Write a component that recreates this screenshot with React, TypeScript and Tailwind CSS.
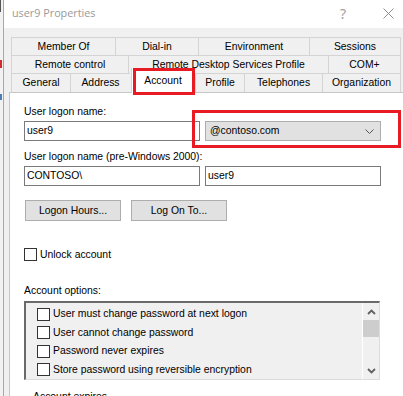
import React from "react";

type Tab = { label: string; w: string };

const ROW1: Tab[] = [
  { label: "Member Of", w: "w-[104px]" },
  { label: "Dial-in", w: "w-[83px]" },
  { label: "Environment", w: "w-[111px]" },
  { label: "Sessions", w: "w-[92px]" },
];

const ROW2: Tab[] = [
  { label: "Remote control", w: "w-[117px]" },
  { label: "Remote Desktop Services Profile", w: "w-[200px]" },
  { label: "COM+", w: "w-[73px]" },
];

const OPTIONS = [
  "User must change password at next logon",
  "User cannot change password",
  "Password never expires",
  "Store password using reversible encryption",
];

function TabCell({ label, w, last }: { label: string; w: string; last?: boolean }) {
  return (
    <div
      className={`${w} h-full flex items-center justify-center border-t border-l border-[#d4d4d4] ${
        last ? "border-r" : ""
      } whitespace-nowrap`}
    >
      {label}
    </div>
  );
}

function CheckBox() {
  return <div className="w-[13px] h-[13px] shrink-0 border border-[#333333] bg-white" />;
}

function Chevron({ up }: { up?: boolean }) {
  return (
    <svg width="9" height="6" viewBox="0 0 9 6">
      <path
        d={up ? "M1 5 L4.5 1.5 L8 5" : "M1 1 L4.5 4.5 L8 1"}
        fill="none"
        stroke="#606060"
        strokeWidth="1.8"
      />
    </svg>
  );
}

export default function App() {
  return (
    <div className="w-[403px] h-[396px] overflow-hidden flex bg-white text-[10.4px] leading-[14px] text-black font-['Liberation_Sans',Arial,sans-serif]">
      {/* sliver of the window behind */}
      <div className="w-[3px] flex flex-col bg-[#f2f2f2]">
        <div className="h-[12px] w-[1px] bg-[#555555]" />
        <div className="h-[48px]" />
        <div className="h-[8px] w-[2px] bg-[#d62b2b]" />
        <div className="h-[26px]" />
        <div className="h-[6px] w-[2px] bg-[#4a7fb5]" />
      </div>

      {/* dialog */}
      <div className="flex-1 flex flex-col border-l border-[#a8a8a8]">
        {/* title bar */}
        <div className="h-[28px] shrink-0 flex items-center pl-[8px] pr-[9px] pb-[2px] bg-white">
          <span className="text-[10.8px] text-[#9a9a9a] font-['Open_Sans',sans-serif]">
            user9 Properties
          </span>
          <div className="flex-1" />
          <span className="text-[14px] leading-[14px] text-[#a0a0a0] font-['Noto_Sans',sans-serif] mr-[37px] mt-[2px]">
            ?
          </span>
          <svg width="11" height="11" viewBox="0 0 11 11" className="mt-[1px]">
            <path d="M0.5 0.5 L10.5 10.5 M10.5 0.5 L0.5 10.5" stroke="#8e8e8e" strokeWidth="1" />
          </svg>
        </div>

        {/* body */}
        <div className="flex-1 flex flex-col bg-[#f0f0f0] pt-[9px] pl-[5px]">
          {/* tabs */}
          <div className="ml-[2px] w-[390px] flex flex-col">
            <div className="flex h-[18px]">
              {ROW1.map((t, i) => (
                <TabCell key={t.label} {...t} last={i === ROW1.length - 1} />
              ))}
            </div>
            <div className="flex h-[18px]">
              {ROW2.map((t, i) => (
                <TabCell key={t.label} {...t} last={i === ROW2.length - 1} />
              ))}
            </div>
            <div className="flex h-[19px]">
              <TabCell label="General" w="w-[59px]" />
              <TabCell label="Address" w="w-[60px]" />
              <div className="relative w-[65px] h-full">
                <div className="absolute left-[1px] right-0 -top-[5px] -bottom-[1px] z-10 bg-white border-l border-r border-[#d4d4d4] flex items-center justify-center pt-[1px]">
                  Account
                </div>
                <div className="absolute left-[3px] right-0 -top-[5px] -bottom-[3px] z-20 border-[3px] border-[#e81a24]" />
              </div>
              <TabCell label="Profile" w="w-[49px]" />
              <TabCell label="Telephones" w="w-[78px]" />
              <TabCell label="Organization" w="w-[79px]" last />
            </div>
          </div>

          {/* tab page */}
          <div className="flex-1 flex flex-col bg-white border-l border-t border-[#c6c6c6] pl-[14px] pt-[12px]">
            <div>User logon name:</div>
            <div className="mt-[2px] flex gap-[5px]">
              <div className="w-[176px] h-[20px] border border-[#7a7a7a] bg-white flex items-center pl-[2px]">
                user9
              </div>
              <div className="relative w-[176px] h-[20px]">
                <div className="w-full h-full border border-[#adadad] bg-[#e1e1e1] flex items-center pl-[4px] pr-[6px]">
                  <span className="flex-1">@contoso.com</span>
                  <svg width="9" height="5" viewBox="0 0 9 5">
                    <path d="M0.5 0.5 L4.5 4.5 L8.5 0.5" fill="none" stroke="#555555" strokeWidth="1" />
                  </svg>
                </div>
                <div className="absolute -left-[13px] -right-[20px] -top-[11px] -bottom-[7px] border-[3px] border-[#e81a24]" />
              </div>
            </div>

            <div className="mt-[9px]">User logon name (pre-Windows 2000):</div>
            <div className="mt-[2px] flex gap-[5px]">
              <div className="w-[176px] h-[20px] border border-[#7a7a7a] bg-white flex items-center pl-[2px]">
                CONTOSO\
              </div>
              <div className="w-[176px] h-[20px] border border-[#7a7a7a] bg-white flex items-center pl-[2px]">
                user9
              </div>
            </div>

            <div className="mt-[14px] flex gap-[10px] pl-[1px]">
              <div className="w-[96px] h-[21px] border border-[#adadad] bg-[#e1e1e1] flex items-center justify-center">
                Logon Hours...
              </div>
              <div className="w-[96px] h-[21px] border border-[#adadad] bg-[#e1e1e1] flex items-center justify-center">
                Log On To...
              </div>
            </div>

            <div className="mt-[27px] h-[13px] flex items-center gap-[3px]">
              <CheckBox />
              <span>Unlock account</span>
            </div>

            <div className="mt-[23px]">Account options:</div>
            <div className="mt-[3px] w-[356px] h-[79px] flex bg-[#f0f0f0] border-t-2 border-l-2 border-r border-b border-t-[#6a6a6a] border-l-[#6a6a6a] border-r-[#dcdcdc] border-b-[#dcdcdc]">
              <div className="flex-1 flex flex-col pt-[2px] pl-[11px]">
                {OPTIONS.map((o) => (
                  <div key={o} className="h-[18.5px] flex items-center gap-[3px]">
                    <CheckBox />
                    <span className="whitespace-nowrap">{o}</span>
                  </div>
                ))}
              </div>
              <div className="w-[17px] flex flex-col border-l border-white">
                <div className="h-[17px] flex items-center justify-center">
                  <Chevron up />
                </div>
                <div className="h-[17px] bg-[#cdcdcd]" />
                <div className="flex-1" />
                <div className="h-[17px] flex items-center justify-center">
                  <Chevron />
                </div>
              </div>
            </div>

            <div className="mt-[10px] pl-[9px]">Account expires</div>
          </div>
        </div>
      </div>
    </div>
  );
}
